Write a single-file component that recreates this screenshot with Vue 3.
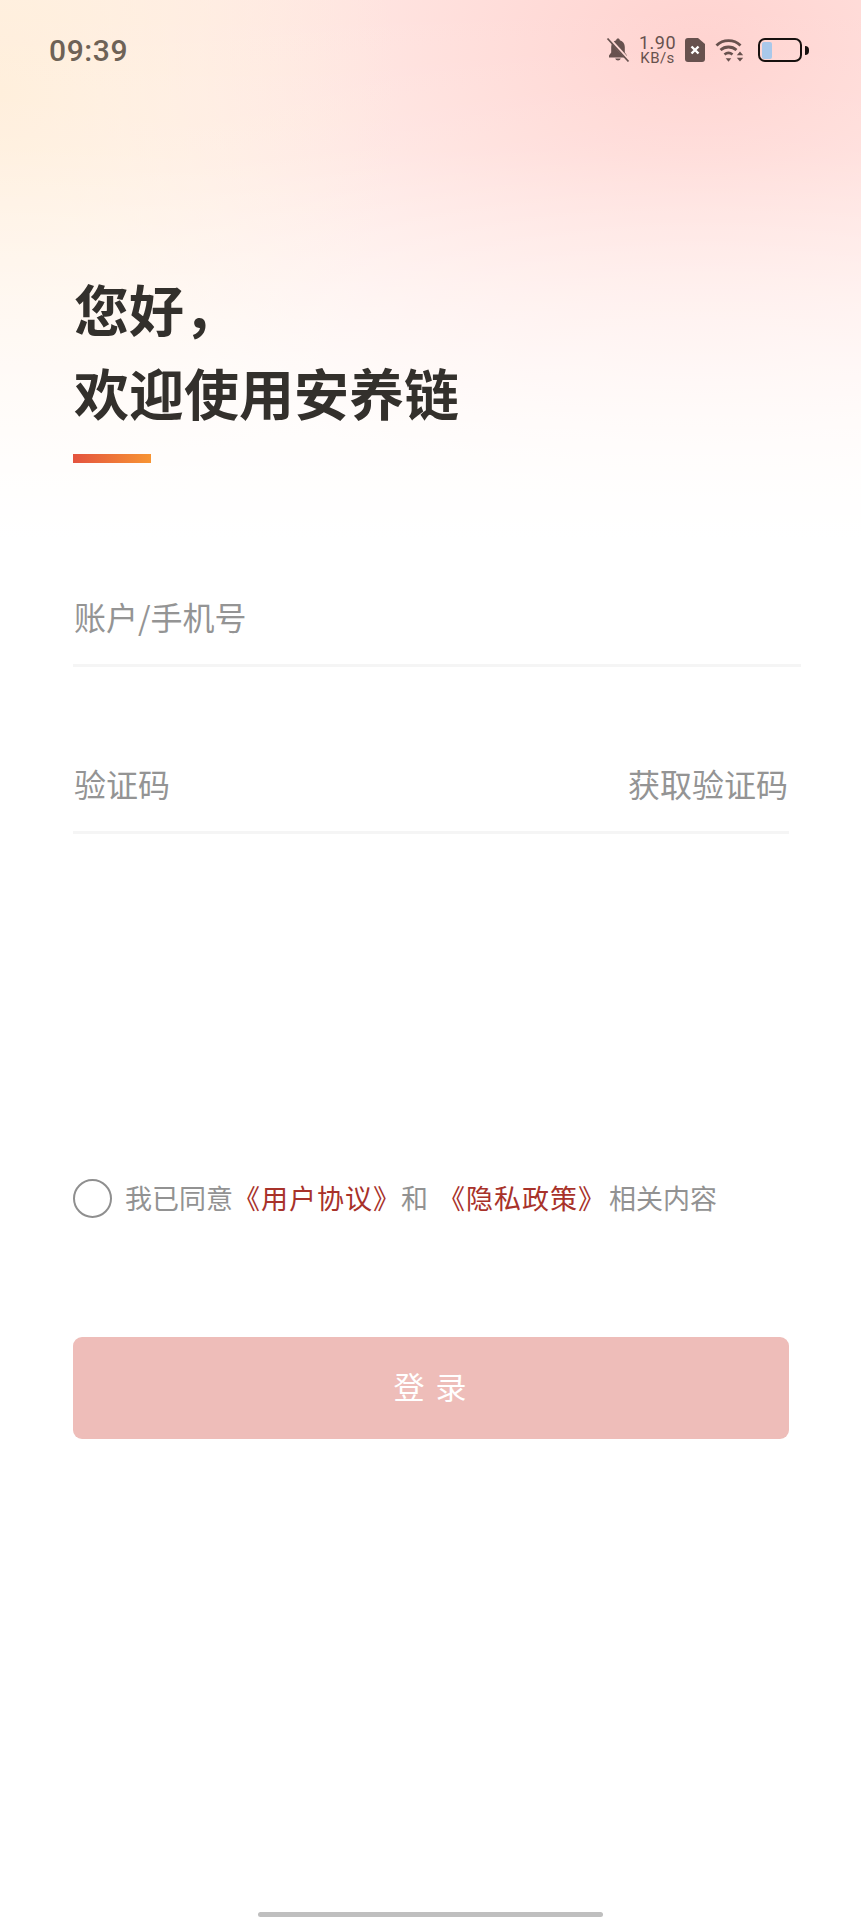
<template>
  <div class="page">
    <div class="status-bar">
      <span class="time">09:39</span>
      <div class="status-icons">
        <svg class="bell" viewBox="0 0 24 26" width="24" height="26">
          <path d="M12 1.500c-1 0-1.700.7-1.800 1.700C7 4.200 5.200 6.800 5.200 10v5.400L3 18.400v2h18v-2l-2.200-3V10c0-3.200-1.800-5.800-5-6.800-.1-1-.8-1.700-1.800-1.700z" fill="#67514e" />
          <path d="M9.200 21.400a2.900 2.900 0 0 0 5.600 0z" fill="#67514e" />
          <path d="M3 1.500l20 22" stroke="#ffd8d4" stroke-width="3.200" />
          <path d="M1.500 1.500l21 23" stroke="#67514e" stroke-width="1.800" />
        </svg>
        <div class="speed">
          <span class="speed-num">1.90</span>
          <span class="speed-unit">KB/s</span>
        </div>
        <svg class="sim" viewBox="0 0 20 24" width="20" height="24">
          <path d="M3 0h10l7 6v15a3 3 0 0 1-3 3H3a3 3 0 0 1-3-3V3a3 3 0 0 1 3-3z" fill="#67514e" />
          <path d="M6.500 8.500l7 7M13.500 8.500l-7 7" stroke="#fff" stroke-width="2.400" />
        </svg>
        <svg class="wifi" viewBox="0 0 29 24" width="29" height="24">
          <path d="M1.500 7.500C8 1 19 1 25.500 7.500" fill="none" stroke="#67514e" stroke-width="2.800" />
          <path d="M5.500 12c4.500-4 11.500-4 16 0" fill="none" stroke="#67514e" stroke-width="2.800" />
          <path d="M9.500 16.500c2.500-2 5.500-2 8 0" fill="none" stroke="#67514e" stroke-width="2.800" />
          <path d="M10.700 20.200h5.600l-2.800 3.600z" fill="#67514e" />
          <path d="M25 13.500l3.200 3.800h-6.400zM25 23.500l3.200-3.800h-6.400z" fill="#67514e" />
        </svg>
        <div class="battery">
          <div class="battery-body">
            <div class="battery-level"></div>
          </div>
          <div class="battery-tip"></div>
        </div>
      </div>
    </div>

    <div class="content">
      <h1 class="title">您好，<br />欢迎使用安养链</h1>
      <div class="title-bar"></div>

      <div class="field first">
        <span class="placeholder">账户/手机号</span>
      </div>
      <div class="field second">
        <span class="placeholder">验证码</span>
        <span class="placeholder">获取验证码</span>
      </div>

      <div class="agree">
        <span class="radio"></span>
        <span class="agree-text">我已同意<em>《用户协议》</em>和<em class="policy">《隐私政策》</em><span class="tail">相关内容</span></span>
      </div>

      <button class="login">登 录</button>
    </div>

    <div class="home-bar"></div>
  </div>
</template>

<script setup>
</script>

<style>
html,
body {
  margin: 0;
  background: #fff;
}
</style>

<style scoped>
.page {
  width: 861px;
  height: 1920px;
  display: flex;
  flex-direction: column;
  overflow: hidden;
  font-family: "Noto Sans CJK SC", "Noto Sans", sans-serif;
  background:
    linear-gradient(to bottom, rgba(255, 255, 255, 0) 0, rgba(255, 255, 255, 0.1) 150px, rgba(255, 255, 255, 0.55) 340px, #fff 540px),
    radial-gradient(ellipse 400px 460px at 0 90px, #ffeeda 0, rgba(255, 238, 218, 0) 100%),
    radial-gradient(ellipse 680px 460px at 700px 50px, #ffd2cf 0, rgba(255, 210, 207, 0) 100%),
    linear-gradient(#fff6f2, #fff6f2);
  background-repeat: no-repeat;
}

.status-bar {
  height: 100px;
  flex-shrink: 0;
  box-sizing: border-box;
  padding: 0 52px 0 49px;
  display: flex;
  align-items: center;
  justify-content: space-between;
}

.time {
  font-family: Roboto, sans-serif;
  font-size: 30px;
  font-weight: 500;
  letter-spacing: 0.600px;
  color: #6e6256;
}

.status-icons {
  display: flex;
  align-items: center;
}

.bell {
  margin-right: 9px;
}

.speed {
  display: flex;
  flex-direction: column;
  align-items: center;
  width: 37px;
  margin-right: 9px;
  font-family: Roboto, sans-serif;
  color: #67514e;
}

.speed-num {
  font-size: 18px;
  line-height: 16px;
  letter-spacing: 0.500px;
}

.speed-unit {
  font-size: 15px;
  line-height: 13px;
  margin-top: 1px;
  letter-spacing: 0.400px;
}

.sim {
  margin-right: 10px;
}

.wifi {
  margin-right: 14px;
}

.battery {
  display: flex;
  align-items: center;
}

.battery-body {
  width: 44px;
  height: 24px;
  box-sizing: border-box;
  border: 2.500px solid #17110f;
  border-radius: 7px;
  padding: 1.500px 2px;
}

.battery-level {
  width: 10px;
  height: 100%;
  border-radius: 2px;
  background: #a9c8ea;
}

.battery-tip {
  width: 4px;
  height: 9px;
  margin-left: 3px;
  border-radius: 0 4px 4px 0;
  background: #17110f;
}

.content {
  flex: 1;
  display: flex;
  flex-direction: column;
  padding: 0 72px 0 73px;
}

.title {
  margin: 165px 0 0 1px;
  font-size: 55px;
  line-height: 84px;
  font-weight: 700;
  color: #33302c;
}

.title-bar {
  width: 78px;
  height: 9px;
  margin-top: 21px;
  background: linear-gradient(to right, #e4533f, #f79433);
}

.field {
  display: flex;
  align-items: center;
  justify-content: space-between;
  height: 89px;
  padding-bottom: 4px;
  border-bottom: 3px solid #f5f5f5;
}

.field.first {
  margin-top: 108px;
  margin-right: -12px;
}

.field.second {
  margin-top: 71px;
}

.placeholder {
  font-size: 32px;
  color: #949494;
  margin: 0 1px;
}

.agree {
  display: flex;
  align-items: center;
  margin-top: 345px;
}

.radio {
  width: 39px;
  height: 39px;
  box-sizing: border-box;
  border: 2.500px solid #8f8f8f;
  border-radius: 50%;
  margin-right: 13px;
}

.agree-text {
  font-size: 27px;
  line-height: 36px;
  margin-bottom: 2px;
  color: #929292;
}

.agree-text em {
  font-style: normal;
  color: #a8322a;
  letter-spacing: 1px;
}

.agree-text .policy {
  margin-left: 10px;
}

.tail {
  margin-left: 3px;
}

.login {
  width: 716px;
  height: 102px;
  margin-top: 119px;
  padding-bottom: 6px;
  border: none;
  border-radius: 9px;
  background: #eebdb9;
  color: #fff;
  font-family: inherit;
  font-size: 31px;
  letter-spacing: 2px;
}

.home-bar {
  flex-shrink: 0;
  align-self: center;
  width: 345px;
  height: 5px;
  margin-bottom: 3px;
  border-radius: 3px;
  background: #bfbfbf;
}
</style>
